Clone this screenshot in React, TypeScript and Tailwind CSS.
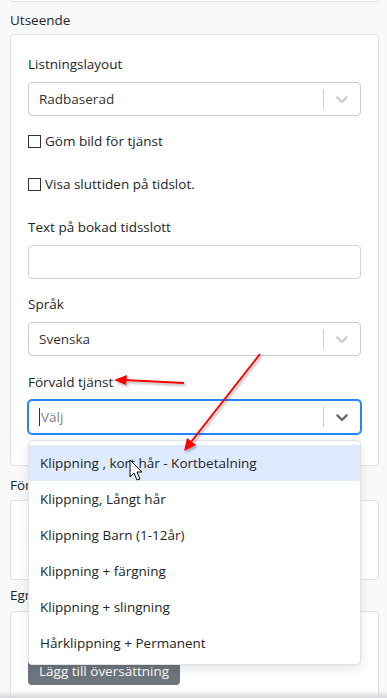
import React from "react";

const CHEVRON =
  "M4.516 7.548c0.436-0.446 1.043-0.481 1.576 0l3.908 3.747 3.908-3.747c0.533-0.481 1.141-0.446 1.574 0 0.436 0.445 0.408 1.197 0 1.615-0.406 0.418-4.695 4.502-4.695 4.502-0.217 0.223-0.502 0.335-0.787 0.335s-0.57-0.112-0.789-0.335c0 0-4.287-4.084-4.695-4.502s-0.436-1.17 0-1.615z";

const options = [
  "Klippning , kort hår - Kortbetalning",
  "Klippning, Långt hår",
  "Klippning Barn (1-12år)",
  "Klippning + färgning",
  "Klippning + slingning",
  "Hårklippning + Permanent",
];

function Select({ value, focused }: { value?: string; focused?: boolean }) {
  return (
    <div
      className={
        focused
          ? "flex h-[34px] items-center rounded-[4px] border border-[#2684ff] bg-white shadow-[0_0_0_1px_#2684ff]"
          : "flex h-[34px] items-center rounded-[4px] border border-[#cccccc] bg-white"
      }
    >
      <div className="flex flex-1 items-center pl-[10px]">
        {focused ? (
          <>
            <span className="mr-[1px] h-[18px] w-px bg-[#333]" />
            <span className="text-[#808080]">Välj</span>
          </>
        ) : (
          <span className="text-[#333]">{value}</span>
        )}
      </div>
      <span className="h-5 w-px bg-[#cccccc]" />
      <div className="p-2">
        <svg viewBox="0 0 20 20" className={focused ? "h-5 w-5 fill-[#666]" : "h-5 w-5 fill-[#cccccc]"}>
          <path d={CHEVRON} />
        </svg>
      </div>
    </div>
  );
}

function Check({ label }: { label: string }) {
  return (
    <div className="flex h-5 items-center gap-[4px]">
      <span className="h-[13px] w-[13px] border border-[#333] bg-white" />
      <span>{label}</span>
    </div>
  );
}

export default function App() {
  return (
    <div
      className="relative h-[698px] w-[387px] overflow-hidden bg-[#f8f9fa] text-[13.5px] leading-5 text-[#212529]"
      style={{ fontFamily: '"Open Sans", "Noto Sans", sans-serif' }}
    >
      <div className="flex flex-col pl-[10px] pr-[8px]">
        <div className="h-[2px] rounded-b-[4px] border-x border-b border-[#dee2e6] bg-white" />
        <div className="mt-[8px] mb-[4px] h-5">Utseende</div>

        <div className="flex flex-col rounded-[4px] border border-[#dee2e6] bg-white px-[17px] pt-[19px] pb-[31px]">
          <div className="mb-2">Listningslayout</div>
          <Select value="Radbaserad" />
          <div className="mt-[15px]">
            <Check label="Göm bild för tjänst" />
          </div>
          <div className="mt-[23px]">
            <Check label="Visa sluttiden på tidslot." />
          </div>
          <div className="mt-[23px] mb-2">Text på bokad tidsslott</div>
          <div className="h-[34px] rounded-[4px] border border-[#ced4da] bg-white" />
          <div className="mt-[15px] mb-2">Språk</div>
          <Select value="Svenska" />
          <div className="mt-[16px] mb-2">Förvald tjänst</div>
          <Select focused />
        </div>

        <div className="mt-[9px] mb-[5px] h-5">Förklaring</div>
        <div className="h-[80px] rounded-[4px] border border-[#dee2e6] bg-white" />

        <div className="mt-[5px] mb-[6px] h-5">Egna texter</div>
        <div className="h-[120px] rounded-[4px] border border-[#dee2e6] bg-white px-[17px] pt-[44px]">
          <button className="h-[29px] rounded-[4px] bg-[#6c757d] px-[11px] leading-5 text-white">
            Lägg till översättning
          </button>
        </div>
      </div>

      <div className="absolute left-[28px] top-[440px] w-[333px] rounded-[4px] border border-[#e2e2e2] bg-white pt-[4px] pb-[3px] shadow-[0_4px_11px_rgba(0,0,0,0.1)]">
        {options.map((o, i) => (
          <div
            key={o}
            className={i === 0 ? "flex h-[36px] items-center bg-[#deebff] px-[11px]" : "flex h-[36px] items-center px-[11px]"}
          >
            {o}
          </div>
        ))}
      </div>

      <div className="absolute bottom-0 left-0 h-[8px] w-full bg-gradient-to-b from-transparent to-[#d6d8db]" />

      <svg className="pointer-events-none absolute inset-0" width="387" height="698">
        <defs>
          <filter id="sh" x="-20%" y="-20%" width="140%" height="140%">
            <feDropShadow dx="1.5" dy="2" stdDeviation="1.2" floodColor="#000" floodOpacity="0.3" />
          </filter>
        </defs>
        <g filter="url(#sh)" fill="#ff0000" stroke="#ff0000">
          <line x1="184" y1="383" x2="124" y2="380" strokeWidth="2" />
          <polygon points="114,380 127,375 126,385" stroke="none" />
          <line x1="260" y1="354" x2="191" y2="442" strokeWidth="2" />
          <polygon points="184,451 187,438 196,445" stroke="none" />
        </g>
        <path
          d="M130 460 L130 477 L134 473 L137 480 L140 479 L137 472 L142 472 Z"
          fill="#fff"
          stroke="#000"
          strokeWidth="1"
          strokeLinejoin="round"
        />
      </svg>
    </div>
  );
}
